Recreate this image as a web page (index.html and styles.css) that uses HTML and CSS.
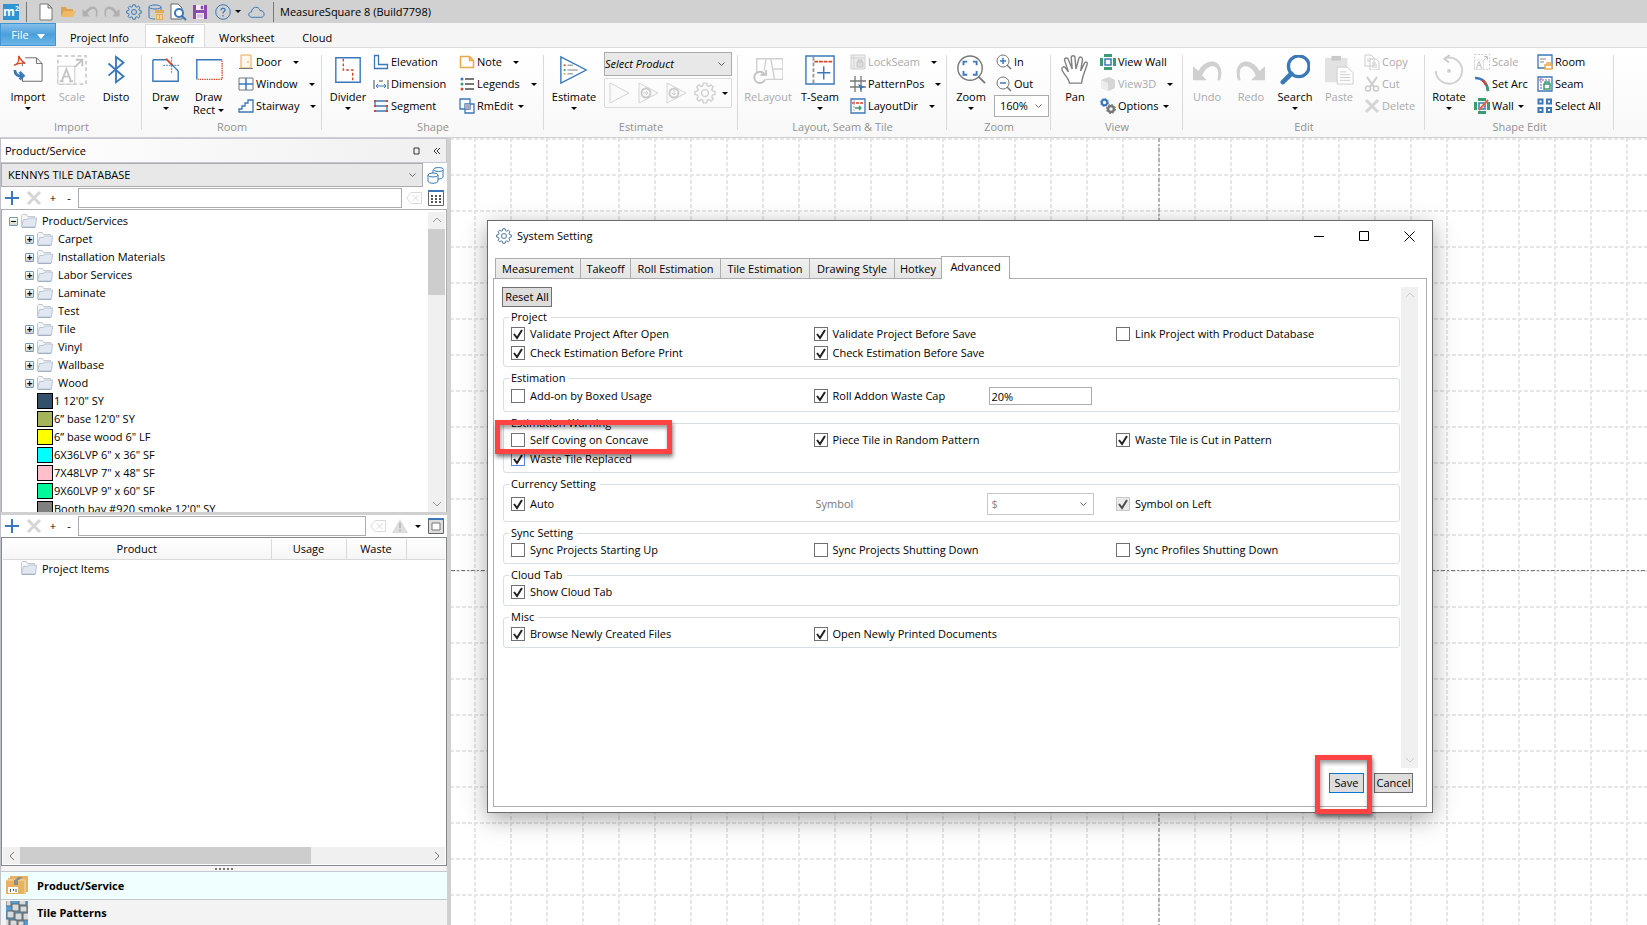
FILE: index.html
```
<!DOCTYPE html>
<html lang="en">
<head>
    <meta charset="UTF-8">
    <meta name="viewport" content="width=device-width, initial-scale=1.0">
    <title>MeasureSquare 8 (Build7798)</title>
    <link rel="stylesheet" href="styles.css">
</head>
<body>

    <!-- shared icons -->
    <svg class="defs" aria-hidden="true">
        <symbol id="i-gear" viewBox="0 0 16 16">
            <path d="M6.8 .8h2.4l.4 1.900 1.200.5 1.600-1.100 1.600 1.600-1.100 1.600.5 1.200 1.900.4v2.200l-1.900.4-.5 1.200 1.100 1.600-1.600 1.600-1.600-1.100-1.200.5-.4 1.900H6.800l-.4-1.900-1.200-.5-1.600 1.100L2 12.300l1.100-1.600-.5-1.200L.7 9.100V6.900l1.900-.4.5-1.200L2 3.700l1.600-1.600 1.600 1.100 1.200-.5z" fill="none" stroke="currentColor"/>
            <circle cx="8" cy="8" r="2.500" fill="none" stroke="currentColor"/>
        </symbol>
        <symbol id="i-folder" viewBox="0 0 16 14">
            <path d="M.5 12.500v-11l1-1h4l1 2h7v2" fill="#f4f6f8" stroke="#c3c9d1"/>
            <path d="M.5 13l2-7.500h4l1-1.500h8l-1 9z" fill="#e1e8f2" stroke="#b9c5d6"/>
            <path d="M1 13.500h13" stroke="#a3afbe"/>
        </symbol>
        <symbol id="i-add" viewBox="0 0 16 16">
            <path d="M8 1v14M1 8h14" stroke="#3a78b9" stroke-width="2"/>
        </symbol>
        <symbol id="i-del" viewBox="0 0 16 16">
            <path d="M2 2l12 12M14 2L2 14" stroke="#d5d5d5" stroke-width="3"/>
        </symbol>
        <symbol id="i-clear" viewBox="0 0 16 12">
            <path d="M.7 6L5 .5h10.500v11H5zM6.500 3l6 6M12.500 3l-6 6" fill="none" stroke="#dadada"/>
        </symbol>
        <symbol id="i-undo" viewBox="0 0 32 22">
            <path d="M1 6v15h15l-5-5c2-6 7-11 12-10 5 1 6 7 4 15h3c3-9 1-18-7-20C16 0 10 5 7 11z" fill="currentColor"/>
        </symbol>
        <symbol id="i-scale" viewBox="0 0 32 32">
            <path d="M1 1h30v30H1z" fill="none" stroke="#d0d0d0" stroke-width="2" stroke-dasharray="4 3"/>
            <path d="M1 12h18v19H1z" fill="#fff" stroke="#c8c8c8"/>
            <path d="M5 28l5-13 5 13M7 23h6M3 28h4M13 28h4M19 13l7-7M20 5h7v7" fill="none" stroke="#c4c4c4" stroke-width="2"/>
        </symbol>
    </svg>

    <header class="titlebar">
        <span class="logo">m<sup>2</sup></span>
        <span class="sep"></span>
        <div class="quick">
            <button aria-label="New"><svg width="16" height="18" viewBox="0 0 16 18"><path d="M2 1h8l4 4v12H2zM10 1v4h4" fill="#fff" stroke="#777"/></svg></button>
            <button aria-label="Open"><svg width="18" height="14" viewBox="0 0 18 14"><path d="M2 12V2h5l1 2h6v3H5z" fill="#e0a24c"/><path d="M2 12l3-6h12l-3 6z" fill="#efb968"/></svg></button>
            <button aria-label="Undo" class="off"><svg width="16" height="11"><use href="#i-undo"/></svg></button>
            <button aria-label="Redo" class="off"><svg width="16" height="11" class="flip"><use href="#i-undo"/></svg></button>
            <button aria-label="Settings" class="blue"><svg width="16" height="16"><use href="#i-gear"/></svg></button>
            <button aria-label="Database"><svg width="16" height="16" viewBox="0 0 16 16"><path d="M1 3v10c0 1 2 2 6 2M13 3v4" fill="none" stroke="#3a78b9"/><ellipse cx="7" cy="3" rx="6" ry="2" fill="none" stroke="#3a78b9"/><path d="M7 6h9v3H7zM8 10h7v6H8z" fill="#e8a94f"/><path d="M10 11v4M13 11v4" stroke="#fff"/></svg></button>
            <button aria-label="Preview"><svg width="18" height="18" viewBox="0 0 18 18"><path d="M2 1h7l4 4v11H2z" fill="#fff" stroke="#666"/><circle cx="10" cy="10" r="4" fill="#fff" stroke="#3a78b9" stroke-width="2"/><path d="M13 13l4 4" stroke="#3a78b9" stroke-width="2"/></svg></button>
            <button aria-label="Save"><svg width="14" height="14" viewBox="0 0 14 14"><path d="M0 0h14v14H0z" fill="#8b4bab"/><path d="M3 0h8v5H3zM3 8h8v6H3z" fill="#f3edf6"/><path d="M8 1h2v3H8zM4 10h6M4 12h6" fill="#8b4bab" stroke="#8b4bab" stroke-width="0.500"/></svg></button>
            <button aria-label="Help" class="help"><svg width="16" height="16" viewBox="0 0 16 16"><circle cx="8" cy="8" r="7.300" fill="none" stroke="#3a78b9"/><path d="M6 6.300C6 3.500 10.400 3.700 10 6.300 9.800 7.600 8 7.700 8 9.500M8 11v1.500" fill="none" stroke="#3a78b9" stroke-width="1.300"/></svg><i class="arrow"></i></button>
            <button aria-label="Cloud"><svg width="17" height="12" viewBox="0 0 17 12"><path d="M4 11.300C-.5 11 0 6 3.500 6 4 0 11 0 12 4.500c5 0 5.500 6 1.500 6.800z" fill="none" stroke="#3a78b9"/></svg></button>
        </div>
        <span class="sep"></span>
        <h1>MeasureSquare 8 (Build7798)</h1>
    </header>

    <nav class="menu">
        <button class="file">File <i></i></button>
        <a href="#">Project Info</a>
        <a href="#" class="active">Takeoff</a>
        <a href="#">Worksheet</a>
        <a href="#">Cloud</a>
    </nav>

    <div class="ribbon">
        <section class="group g-import">
            <div class="tools">
                <button class="big"><svg viewBox="0 0 32 32"><path d="M13 3h12l6 6v19H10v-4M25 3v6h6" fill="none" stroke="#666"/><path d="M10 9v3M10 26v2" stroke="#666"/><path d="M1 11c4-1 6-5 5-10 2 4 3 6 7 8-4-1-8 0-12 2z" fill="none" stroke="#d2492a" stroke-width="1.500"/><path d="M2 16c0 5 3 7 8 6M7 18l4 4-4 4" fill="none" stroke="#3a78b9" stroke-width="3"/></svg>Import<i class="arrow"></i></button>
                <button class="big off"><svg viewBox="0 0 32 32"><use href="#i-scale"/></svg>Scale</button>
                <button class="big"><svg viewBox="0 0 32 32"><path d="M8 9l16 14-8 6V2l8 6L8 22" fill="none" stroke="#3a78b9" stroke-width="2"/></svg>Disto</button>
            </div>
            <h2>Import</h2>
        </section>

        <section class="group g-room">
            <div class="tools">
                <button class="big"><svg viewBox="0 0 32 32"><path d="M2 5h14M29 17v11H2V5" fill="none" stroke="#3a78b9" stroke-width="1.500"/><path d="M22 10l7 7" stroke="#3a78b9" stroke-width="1.500"/><path d="M16 4l7 7" stroke="#d2492a" stroke-width="2"/><path d="M22 2v18M13 11h18" stroke="#3a78b9" stroke-dasharray="2 1"/></svg>Draw<i class="arrow"></i></button>
                <button class="big"><svg viewBox="0 0 32 32"><path d="M3 26V5h27" fill="none" stroke="#3a78b9" stroke-width="1.500"/><path d="M30 6v20H4" fill="none" stroke="#d2492a" stroke-width="1.500" stroke-dasharray="1.500 1"/></svg>Draw<span>Rect <i class="arrow"></i></span></button>
                <div class="col">
                    <button class="small"><svg viewBox="0 0 16 16"><path d="M3 1h10v13H3z" fill="#fff8ec" stroke="#e8a94f"/><path d="M1 14.500h14" stroke="#777"/><path d="M10 7v2" stroke="#e8a94f"/></svg>Door<i class="arrow far"></i></button>
                    <button class="small"><svg viewBox="0 0 16 16"><path d="M1 2h14v12H1z" fill="#fff" stroke="#777"/><path d="M8 2v12M1 8h14" stroke="#3a78b9" stroke-width="1.500"/></svg>Window<i class="arrow far"></i></button>
                    <button class="small"><svg viewBox="0 0 16 16"><path d="M1 14v-3h3V8h3V5h3V2h5v12z" fill="#fff" stroke="#3a78b9" stroke-width="1.300"/></svg>Stairway<i class="arrow far"></i></button>
                </div>
            </div>
            <h2>Room</h2>
        </section>

        <section class="group g-shape">
            <div class="tools">
                <button class="big"><svg viewBox="0 0 32 32"><path d="M3 3h26v26H3z" fill="#fff" stroke="#3a78b9" stroke-width="1.500"/><path d="M11 4v12h10v12" fill="none" stroke="#d2492a" stroke-width="1.500" stroke-dasharray="3 2"/></svg>Divider<i class="arrow"></i></button>
                <div class="col">
                    <button class="small"><svg viewBox="0 0 16 16"><path d="M1.500 1.500h4v9h9v4h-13z" fill="#fff" stroke="#3a78b9" stroke-width="1.300"/></svg>Elevation</button>
                    <button class="small"><svg viewBox="0 0 16 16"><path d="M1 4v9M15 4v9M6 5h4" stroke="#888" stroke-width="1.500"/><path d="M3 10h10M5 8l-2 2 2 2M11 8l2 2-2 2" fill="none" stroke="#3a78b9"/></svg>Dimension</button>
                    <button class="small"><svg viewBox="0 0 16 16"><path d="M2 3h12M2 8h12M2 13h12M2 3v5M14 8v5" stroke="#3a78b9" stroke-width="1.300"/><path d="M1 2h2v2H1zM13 2h2v2h-2zM1 7h2v2H1zM13 7h2v2h-2zM1 12h2v2H1zM13 12h2v2h-2z" fill="#d2492a"/></svg>Segment</button>
                </div>
                <div class="col">
                    <button class="small"><svg viewBox="0 0 16 16"><path d="M1.500 2.500h9l4 4v7h-13zM10.500 2.500v4h4" fill="#fff" stroke="#e8a94f" stroke-width="1.500"/></svg>Note<i class="arrow far"></i></button>
                    <button class="small"><svg viewBox="0 0 16 16"><circle cx="3" cy="3" r="1.500" fill="#3a78b9"/><circle cx="3" cy="8" r="1.500" fill="#3b9b73"/><circle cx="3" cy="13" r="1.500" fill="#d2492a"/><path d="M6 3h9M6 8h9M6 13h9" stroke="#777" stroke-width="2"/></svg>Legends<i class="arrow far"></i></button>
                    <button class="small"><svg viewBox="0 0 16 16"><path d="M1 1h10v10H1zM6 6h9v9H6z" fill="none" stroke="#3a78b9" stroke-width="1.300"/><path d="M6 6h5v5H6z" fill="#aaa"/></svg>RmEdit<i class="arrow"></i></button>
                </div>
            </div>
            <h2>Shape</h2>
        </section>

        <section class="group g-estimate">
            <div class="tools">
                <button class="big"><svg viewBox="0 0 32 32"><path d="M2 2v28l27-14z" fill="#fff" stroke="#3a78b9" stroke-width="1.500"/><path d="M9 11h6M9 16h11M9 20h6" stroke="#aaa" stroke-width="1.500"/><path d="M5 10h2v2H5z" fill="#d2492a"/><path d="M5 15h2v2H5z" fill="#3b9b73"/><path d="M5 19h2v2H5z" fill="#e8a94f"/></svg>Estimate<i class="arrow"></i></button>
                <div class="estimate-box">
                    <select class="product" aria-label="Product"><option>Select Product</option></select>
                    <div class="play">
                        <button aria-label="Run"><svg viewBox="0 0 22 22"><path d="M2 1v20l19-10z" fill="#fafafa" stroke="#d4d4d4"/></svg></button>
                        <button aria-label="Run next"><svg viewBox="0 0 22 22"><path d="M2 1v20l19-10z" fill="#fafafa" stroke="#d4d4d4"/><circle cx="9" cy="11" r="4.500" fill="none" stroke="#ccc" stroke-width="2"/><path d="M6 11h5M9 9l2 2-2 2" fill="none" stroke="#ccc"/></svg></button>
                        <button aria-label="Run down"><svg viewBox="0 0 22 22"><path d="M2 1v20l19-10z" fill="#fafafa" stroke="#d4d4d4"/><circle cx="9" cy="11" r="4.500" fill="none" stroke="#ccc" stroke-width="2"/><path d="M9 8v5M7 11l2 2 2-2" fill="none" stroke="#ccc"/></svg></button>
                        <button aria-label="Options" class="grey"><svg viewBox="0 0 16 16"><use href="#i-gear"/></svg></button>
                        <i class="arrow"></i>
                    </div>
                </div>
            </div>
            <h2>Estimate</h2>
        </section>

        <section class="group g-layout">
            <div class="tools">
                <button class="big wide off"><svg viewBox="0 0 32 32"><path d="M4 20V4h28v22H14M14 4l-2 12M19 4l4 22M21 15h11" fill="none" stroke="#d0d0d0" stroke-width="1.500"/><path d="M12 20a6 6 0 1 0 1 6M8 21h6v-5" fill="none" stroke="#c4c4c4" stroke-width="2"/></svg>ReLayout</button>
                <button class="big"><svg viewBox="0 0 32 32"><path d="M1 1h30v30H1z" fill="#fff" stroke="#3a78b9" stroke-width="1.500"/><path d="M9 2v28" stroke="#999" stroke-width="2" stroke-dasharray="4 2"/><path d="M10 7h20" stroke="#d2492a" stroke-width="2" stroke-dasharray="4 1"/><path d="M20 12v14M13 19h14" stroke="#3a78b9" stroke-width="1.500"/></svg>T-Seam<i class="arrow"></i></button>
                <div class="col">
                    <button class="small off"><svg viewBox="0 0 16 16"><path d="M1 1h14v14H1zM4 1v14M1 4h14" fill="#eee" stroke="#d0d0d0"/><path d="M7 8h6v5H7zM8 8V6h4v2" fill="#ddd" stroke="#c4c4c4"/></svg>LockSeam<i class="arrow far"></i></button>
                    <button class="small"><svg viewBox="0 0 16 16"><path d="M5 0v16M11 0v16M0 5h16M0 11h16" stroke="#777" stroke-width="1.300"/><path d="M8 8l7 3-3 1-1 3z" fill="#3a78b9"/></svg>PatternPos<i class="arrow far"></i></button>
                    <button class="small"><svg viewBox="0 0 16 16"><path d="M1 1h14v14H1z" fill="#fff" stroke="#3a78b9" stroke-width="1.300"/><path d="M2 5h12" stroke="#d2492a" stroke-width="1.500" stroke-dasharray="3 1"/><path d="M4 2v12" stroke="#aaa" stroke-dasharray="2 1"/><path d="M5 10h6M9 8l2 2-2 2" fill="none" stroke="#3b9b73" stroke-width="1.300"/></svg>LayoutDir<i class="arrow far"></i></button>
                </div>
            </div>
            <h2>Layout, Seam &amp; Tile</h2>
        </section>

        <section class="group g-zoom">
            <div class="tools">
                <button class="big"><svg viewBox="0 0 32 32"><circle cx="15" cy="14" r="13" fill="#fff" stroke="#777" stroke-width="1.500"/><path d="M24 23l7 7" stroke="#777" stroke-width="2"/><path d="M8 11V7h4M18 7h4v4M22 17v4h-4M12 21H8v-4" fill="none" stroke="#3a78b9" stroke-width="2"/></svg>Zoom<i class="arrow"></i></button>
                <div class="col">
                    <button class="small"><svg viewBox="0 0 16 16"><circle cx="7" cy="7" r="6" fill="#fff" stroke="#777"/><path d="M11 11l4 4" stroke="#777" stroke-width="1.500"/><path d="M4 7h6M7 4v6" stroke="#3a78b9" stroke-width="1.500"/></svg>In</button>
                    <button class="small"><svg viewBox="0 0 16 16"><circle cx="7" cy="7" r="6" fill="#fff" stroke="#777"/><path d="M11 11l4 4" stroke="#777" stroke-width="1.500"/><path d="M4 7h6" stroke="#3a78b9" stroke-width="1.500"/></svg>Out</button>
                    <select class="percent" aria-label="Zoom level"><option>160%</option></select>
                </div>
            </div>
            <h2>Zoom</h2>
        </section>

        <section class="group g-view">
            <div class="tools">
                <button class="big"><svg viewBox="0 0 32 32"><path d="M10 30c0-5-7-10-8-15 0-3 3-3 4-1l3 4L5 6c-1-3 3-4 4-1l4 10L12 3c0-3 4-3 4 0l1 12 3-11c1-3 4-2 4 1l-2 12 4-8c1-3 4-1 3 1-2 6-5 12-6 20z" fill="#fff" stroke="#808080" stroke-width="1.500"/></svg>Pan</button>
                <div class="col">
                    <button class="small"><svg viewBox="0 0 16 16"><path d="M0 4h3v8H0zM13 4h3v8h-3zM4 0h8v3H4zM4 13h8v3H4z" fill="#3b9b73"/><path d="M5 5h6v6H5z" fill="#fff" stroke="#3a78b9" stroke-width="1.500"/></svg>View Wall</button>
                    <button class="small off"><svg viewBox="0 0 16 16"><path d="M1 4l8-3 6 3v8l-6 3-8-3z" fill="#d6d6d6"/><path d="M1 4l7 3v8l-7-3z" fill="#ececec"/></svg>View3D<i class="arrow far"></i></button>
                    <button class="small"><svg viewBox="0 0 16 16"><circle cx="4.500" cy="4.500" r="2.700" fill="none" stroke="#3a78b9" stroke-width="2"/><circle cx="4.500" cy="4.500" r="4" fill="none" stroke="#3a78b9" stroke-dasharray="1.600 1.500"/><circle cx="11" cy="11" r="3" fill="none" stroke="#777" stroke-width="2.500"/><circle cx="11" cy="11" r="4.600" fill="none" stroke="#777" stroke-dasharray="1.800 1.800"/></svg>Options<i class="arrow"></i></button>
                </div>
            </div>
            <h2>View</h2>
        </section>

        <section class="group g-edit">
            <div class="tools">
                <button class="big off"><svg viewBox="0 -3 32 32"><use href="#i-undo" width="32" height="28"/></svg>Undo</button>
                <button class="big off"><svg viewBox="0 -3 32 32" class="flip"><use href="#i-undo" width="32" height="28"/></svg>Redo</button>
                <button class="big"><svg viewBox="0 0 32 32"><circle cx="20" cy="12" r="11" fill="#fff" stroke="#3a78b9" stroke-width="3.500"/><path d="M12 20l-9 9" stroke="#3a78b9" stroke-width="5" stroke-linecap="round"/></svg>Search<i class="arrow"></i></button>
                <button class="big off"><svg viewBox="0 0 32 32"><path d="M1 3h24v26H1z" fill="#e2e2e2"/><path d="M8 1h10v5H8z" fill="#c9c9c9"/><path d="M14 13h11l6 6v12H14z" fill="#fff" stroke="#ccc"/><path d="M17 18h7M17 21h11M17 24h11M17 27h11" stroke="#ccc"/></svg>Paste</button>
                <div class="col">
                    <button class="small off"><svg viewBox="0 0 16 16"><path d="M1 1h6l3 3v8H1zM6 5h6l3 3v8H6z" fill="#fff" stroke="#ccc"/><path d="M3 5h4M3 7h3M8 9h4M8 11h5M8 13h5" stroke="#ccc"/></svg>Copy</button>
                    <button class="small off"><svg viewBox="0 0 16 16"><path d="M3 1l7 10M13 1L6 11" stroke="#ccc" stroke-width="2"/><circle cx="4" cy="12.500" r="2.500" fill="none" stroke="#ccc" stroke-width="1.500"/><circle cx="12" cy="12.500" r="2.500" fill="none" stroke="#ccc" stroke-width="1.500"/></svg>Cut</button>
                    <button class="small off"><svg viewBox="0 0 16 16"><use href="#i-del"/></svg>Delete</button>
                </div>
            </div>
            <h2>Edit</h2>
        </section>

        <section class="group g-shape-edit">
            <div class="tools">
                <button class="big"><svg viewBox="0 0 32 32"><path d="M13 3a14 14 0 1 1-11 14" fill="none" stroke="#d0d0d0" stroke-width="2"/><path d="M17 0l-6 4 5 4" fill="none" stroke="#ccc" stroke-width="2"/><circle cx="16" cy="17" r="2" fill="#ccc"/></svg>Rotate<i class="arrow"></i></button>
                <div class="col">
                    <button class="small off"><svg viewBox="0 0 32 32"><use href="#i-scale"/></svg>Scale</button>
                    <button class="small"><svg viewBox="0 0 16 16"><path d="M1 2c8 0 12 5 13 13" fill="none" stroke="#3a78b9" stroke-width="2.500"/><path d="M8 4c2 1 3 3 4 5" fill="none" stroke="#d2492a" stroke-width="2.500"/><path d="M13 10l1 5" stroke="#3b9b73" stroke-width="2.500"/></svg>Set Arc</button>
                    <button class="small"><svg viewBox="0 0 16 16"><path d="M0 4h3v8H0zM13 4h3v8h-3zM4 0h8v3H4zM4 13h8v3H4z" fill="#3b9b73"/><path d="M5 5h6v6H5z" fill="#fff" stroke="#3a78b9" stroke-width="1.500"/><path d="M5 12L14 2" stroke="#e0663f" stroke-width="2"/></svg>Wall<i class="arrow"></i></button>
                </div>
                <div class="col">
                    <button class="small"><svg viewBox="0 0 16 16"><path d="M1 1h14v13H1z" fill="#fff" stroke="#3a78b9" stroke-width="1.300"/><path d="M3 5h6M3 8h4" stroke="#888"/><path d="M8 11h7v4H8zM10 11V9h4v2" fill="#fff" stroke="#e8a94f" stroke-width="1.500"/></svg>Room</button>
                    <button class="small"><svg viewBox="0 0 16 16"><path d="M1 1h14v14H1z" fill="#fff" stroke="#3a78b9" stroke-width="1.300"/><path d="M4 2v12M2 4h12" stroke="#8b4bab" stroke-dasharray="2 1"/><path d="M7 8h6v5H7zM8 8V6h4v2" fill="#fff" stroke="#3b9b73" stroke-width="1.500"/></svg>Seam</button>
                    <button class="small"><svg viewBox="0 0 16 16"><path d="M1.500 1.500h4v4h-4zM10 1.500h4v4h-4zM1.500 10h4v4h-4zM10 10h4v4h-4z" fill="#fff" stroke="#3a78b9" stroke-width="2"/></svg>Select All</button>
                </div>
            </div>
            <h2>Shape Edit</h2>
        </section>
    </div>

    <main>
        <aside class="side">
            <div class="side-head">
                <h2>Product/Service</h2>
                <button aria-label="Pin"><svg width="8" height="8" viewBox="0 0 8 8"><path d="M1 1h5v6H1z" fill="none" stroke="#333"/></svg></button>
                <button aria-label="Collapse"><svg width="8" height="8" viewBox="0 0 8 8"><path d="M4 1L1 4l3 3M7 1L4 4l3 3" fill="none" stroke="#333"/></svg></button>
            </div>
            <div class="db-row">
                <select aria-label="Database"><option>KENNYS TILE DATABASE</option></select>
                <button aria-label="Databases"><svg width="18" height="18" viewBox="0 0 18 18"><path d="M6 4v4M16 4v7c0 1-2 2-5 2" fill="none" stroke="#3a78b9"/><ellipse cx="11.500" cy="3.500" rx="5" ry="2" fill="#fff" stroke="#3a78b9"/><path d="M1 9v6c0 3 10 3 10 0V9" fill="#fff" stroke="#3a78b9"/><ellipse cx="6" cy="9" rx="5" ry="2" fill="#fff" stroke="#3a78b9"/></svg></button>
            </div>
            <div class="bar">
                <button aria-label="Add"><svg width="16" height="16"><use href="#i-add"/></svg></button>
                <button aria-label="Delete"><svg width="16" height="16"><use href="#i-del"/></svg></button>
                <button>+</button>
                <button>-</button>
                <input type="text" aria-label="Search products">
                <button aria-label="Clear"><svg width="16" height="12"><use href="#i-clear"/></svg></button>
                <button aria-label="Grid"><svg width="16" height="16" viewBox="0 0 16 16"><path d="M.5 .5h15v15H.5z" fill="#fff" stroke="#666"/><path d="M0 1h16" stroke="#3a78b9" stroke-width="2"/><path d="M3 6h10M3 9h10M3 12h10" stroke="#555" stroke-width="2" stroke-dasharray="2 2"/></svg></button>
            </div>

            <div class="tree-box">
                <ul class="tree">
                    <li class="root"><button class="exp" aria-label="Collapse">−</button><svg class="folder"><use href="#i-folder"/></svg>Product/Services</li>
                    <li><button class="exp" aria-label="Expand">+</button><svg class="folder"><use href="#i-folder"/></svg>Carpet</li>
                    <li><button class="exp" aria-label="Expand">+</button><svg class="folder"><use href="#i-folder"/></svg>Installation Materials</li>
                    <li><button class="exp" aria-label="Expand">+</button><svg class="folder"><use href="#i-folder"/></svg>Labor Services</li>
                    <li><button class="exp" aria-label="Expand">+</button><svg class="folder"><use href="#i-folder"/></svg>Laminate</li>
                    <li class="leaf"><svg class="folder"><use href="#i-folder"/></svg>Test</li>
                    <li><button class="exp" aria-label="Expand">+</button><svg class="folder"><use href="#i-folder"/></svg>Tile</li>
                    <li><button class="exp" aria-label="Expand">+</button><svg class="folder"><use href="#i-folder"/></svg>Vinyl</li>
                    <li><button class="exp" aria-label="Expand">+</button><svg class="folder"><use href="#i-folder"/></svg>Wallbase</li>
                    <li><button class="exp" aria-label="Expand">+</button><svg class="folder"><use href="#i-folder"/></svg>Wood</li>
                    <li class="leaf"><i class="swatch navy"></i>1 12'0" SY</li>
                    <li class="leaf"><i class="swatch olive"></i>6” base 12'0" SY</li>
                    <li class="leaf"><i class="swatch yellow"></i>6” base wood 6" LF</li>
                    <li class="leaf"><i class="swatch cyan"></i>6X36LVP 6" x 36" SF</li>
                    <li class="leaf"><i class="swatch pink"></i>7X48LVP 7" x 48" SF</li>
                    <li class="leaf"><i class="swatch green"></i>9X60LVP 9" x 60" SF</li>
                    <li class="leaf"><i class="swatch gray"></i>Booth bay #920 smoke 12'0" SY</li>
                </ul>
                <div class="vscroll">
                    <svg viewBox="0 0 17 17"><path d="M5 10l4-4 4 4" fill="none" stroke="#999"/></svg>
                    <i class="thumb"></i>
                    <svg viewBox="0 0 17 17"><path d="M5 7l4 4 4-4" fill="none" stroke="#999"/></svg>
                </div>
            </div>

            <div class="bar lower">
                <button aria-label="Add"><svg width="16" height="16"><use href="#i-add"/></svg></button>
                <button aria-label="Delete"><svg width="16" height="16"><use href="#i-del"/></svg></button>
                <button>+</button>
                <button>-</button>
                <input type="text" aria-label="Search project items">
                <button aria-label="Clear"><svg width="16" height="12"><use href="#i-clear"/></svg></button>
                <button aria-label="Warnings"><svg width="16" height="14" viewBox="0 0 16 14"><path d="M8 0l8 14H0z" fill="#dedede"/><path d="M8 4v5M8 10.500v2" stroke="#b5b5b5" stroke-width="1.500"/></svg></button>
                <button class="drop" aria-label="More"><i class="arrow"></i></button>
                <button aria-label="Window"><svg width="16" height="16" viewBox="0 0 16 16"><path d="M.5 .5h15v15H.5z" fill="#ddd" stroke="#666"/><path d="M0 1h16" stroke="#3a78b9" stroke-width="2"/><path d="M4 5h8v7H4z" fill="#fff" stroke="#777"/></svg></button>
            </div>

            <div class="items-box">
                <table>
                    <thead>
                        <tr><th class="c-product">Product</th><th class="c-usage">Usage</th><th class="c-waste">Waste</th><th></th></tr>
                    </thead>
                    <tbody>
                        <tr><td colspan="4"><svg class="folder"><use href="#i-folder"/></svg>Project Items</td></tr>
                    </tbody>
                </table>
                <div class="hscroll">
                    <svg viewBox="0 0 17 17"><path d="M11 5L7 9l4 4" fill="none" stroke="#777"/></svg>
                    <i class="thumb"></i>
                    <svg viewBox="0 0 17 17"><path d="M7 5l4 4-4 4" fill="none" stroke="#777"/></svg>
                </div>
            </div>

            <div class="grip"><i></i></div>
            <a href="#" class="panel-link current"><svg width="22" height="20" viewBox="0 0 22 20"><path d="M4 0h18v16h-2v2H0V4h2V2h2z" fill="#e9b263"/><path d="M0 4h19v14" fill="none" stroke="#f6dcb2"/><path d="M8 4h4v5H8zM12 1h5l-4 3H9z" fill="#8d8d8d"/><path d="M2 11h10v6H2z" fill="#fff"/><path d="M4.500 13v3M7.500 13v2M10 13v3" stroke="#555"/></svg>Product/Service</a>
            <a href="#" class="panel-link"><svg width="22" height="24" viewBox="0 0 22 24"><path d="M0 0h22v24H0z" fill="#4f9fdd"/><g fill="#d9dadb" stroke="#666"><path d="M0-1h5v6H0zM6 3h7v7H6zM13-2h7v6h-7zM14 5h7v6h-7zM1 10h7v7H1zM9 12h7v7H9zM17 12h6v7h-6zM4 19h7v6H4zM-3 18h6v7h-6zM12 20h6v5h-6z"/></g></svg>Tile Patterns</a>
        </aside>

        <div class="canvas">
            <svg class="grid" width="100%" height="100%">
                <defs>
                    <pattern id="cells" x="23" y="0" width="36" height="36" patternUnits="userSpaceOnUse">
                        <path d="M0 1h36M1 0v36" stroke="#e6e6e6" stroke-width="2" stroke-dasharray="4 2"/>
                    </pattern>
                </defs>
                <rect width="100%" height="100%" fill="url(#cells)"/>
                <path d="M0 432.500h3000" stroke="#777" stroke-dasharray="4 2 2 2"/>
                <path d="M708 0v2000" stroke="#b4b4b4" stroke-width="2" stroke-dasharray="4 2 2 2"/>
            </svg>

            <div class="dialog" role="dialog" aria-labelledby="dialog-title">
                <div class="dialog-head">
                    <svg class="head-icon" width="16" height="16"><use href="#i-gear"/></svg>
                    <h2 id="dialog-title">System Setting</h2>
                    <button aria-label="Minimize"><svg width="11" height="11" viewBox="0 0 11 11"><path d="M0 5.500h10" stroke="#000"/></svg></button>
                    <button aria-label="Maximize"><svg width="11" height="11" viewBox="0 0 11 11"><path d="M.5 .5h9v9h-9z" fill="none" stroke="#000"/></svg></button>
                    <button aria-label="Close"><svg width="11" height="11" viewBox="0 0 11 11"><path d="M.5 .5l10 10M10.500 .5l-10 10" stroke="#000"/></svg></button>
                </div>

                <div class="tabs">
                    <button class="t-measurement">Measurement</button>
                    <button class="t-takeoff">Takeoff</button>
                    <button class="t-roll">Roll Estimation</button>
                    <button class="t-tile">Tile Estimation</button>
                    <button class="t-drawing">Drawing Style</button>
                    <button class="t-hotkey">Hotkey</button>
                    <button class="t-advanced active">Advanced</button>
                </div>

                <div class="pane">
                    <div class="pane-body">
                        <form class="settings">
                            <button type="button" class="btn">Reset All</button>

                            <fieldset>
                                <legend>Project</legend>
                                <div class="row">
                                    <label><input type="checkbox" checked>Validate Project After Open</label>
                                    <label><input type="checkbox" checked>Validate Project Before Save</label>
                                    <label><input type="checkbox">Link Project with Product Database</label>
                                    <label><input type="checkbox" checked>Check Estimation Before Print</label>
                                    <label><input type="checkbox" checked>Check Estimation Before Save</label>
                                </div>
                            </fieldset>

                            <fieldset>
                                <legend>Estimation</legend>
                                <div class="row medium">
                                    <label><input type="checkbox">Add-on by Boxed Usage</label>
                                    <div class="pair">
                                        <label><input type="checkbox" checked>Roll Addon Waste Cap</label>
                                        <input type="text" class="cap" value="20%" aria-label="Waste cap">
                                    </div>
                                </div>
                            </fieldset>

                            <fieldset>
                                <legend>Estimation Warning</legend>
                                <div class="row">
                                    <label><input type="checkbox">Self Coving on Concave</label>
                                    <label><input type="checkbox" checked>Piece Tile in Random Pattern</label>
                                    <label><input type="checkbox" checked>Waste Tile is Cut in Pattern</label>
                                    <label><input type="checkbox" class="focus" checked>Waste Tile Replaced</label>
                                </div>
                                <span class="mark mark-option"></span>
                            </fieldset>

                            <fieldset>
                                <legend>Currency Setting</legend>
                                <div class="row tall">
                                    <label><input type="checkbox" checked>Auto</label>
                                    <div class="pair">
                                        <label for="symbol" class="muted">Symbol</label>
                                        <select id="symbol" disabled><option>$</option></select>
                                    </div>
                                    <label><input type="checkbox" checked disabled>Symbol on Left</label>
                                </div>
                            </fieldset>

                            <fieldset>
                                <legend>Sync Setting</legend>
                                <div class="row">
                                    <label><input type="checkbox">Sync Projects Starting Up</label>
                                    <label><input type="checkbox">Sync Projects Shutting Down</label>
                                    <label><input type="checkbox">Sync Profiles Shutting Down</label>
                                </div>
                            </fieldset>

                            <fieldset>
                                <legend>Cloud Tab</legend>
                                <div class="row">
                                    <label><input type="checkbox" checked>Show Cloud Tab</label>
                                </div>
                            </fieldset>

                            <fieldset>
                                <legend>Misc</legend>
                                <div class="row">
                                    <label><input type="checkbox" checked>Browse Newly Created Files</label>
                                    <label><input type="checkbox" checked>Open Newly Printed Documents</label>
                                </div>
                            </fieldset>
                        </form>
                        <div class="vscroll">
                            <svg viewBox="0 0 17 17"><path d="M5 10l4-4 4 4" fill="none" stroke="#ccc"/></svg>
                            <svg viewBox="0 0 17 17"><path d="M5 7l4 4 4-4" fill="none" stroke="#ccc"/></svg>
                        </div>
                    </div>
                    <div class="actions">
                        <button class="btn primary">Save<span class="mark mark-save"></span></button>
                        <button class="btn">Cancel</button>
                    </div>
                </div>
            </div>
        </div>
    </main>

</body>
</html>
```
FILE: styles.css
```
* {
    box-sizing: border-box;
}

body {
    display: flex;
    flex-direction: column;
    height: 100vh;
    margin: 0;
    overflow: hidden;
    background: #fff;
    color: #000;
    font: 11px/16px "Open Sans", "Noto Sans", sans-serif;
}

button, input, select {
    margin: 0;
    padding: 0;
    border: 0;
    border-radius: 0;
    background: none;
    color: inherit;
    font: inherit;
}

h1, h2 {
    margin: 0;
    font-size: inherit;
    font-weight: normal;
}

a {
    color: inherit;
    text-decoration: none;
}

svg {
    display: block;
    flex: none;
}

select {
    appearance: none;
    background: url("data:image/svg+xml,%3Csvg xmlns='http://www.w3.org/2000/svg' width='7' height='5'%3E%3Cpath d='M.5 .5l3 3 3-3' fill='none' stroke='%23666'/%3E%3C/svg%3E") no-repeat right 6px center;
}

.defs {
    display: none;
}

.flip {
    transform: scaleX(-1);
}

.arrow {
    flex: none;
    display: inline-block;
    border: 3px solid transparent;
    border-top-color: #000;
    border-bottom: 0;
}

/* title bar */
.titlebar {
    flex: none;
    display: flex;
    align-items: center;
    height: 23px;
    padding-left: 3px;
    background: #d1d1d1;
}

.logo {
    width: 16px;
    height: 16px;
    background: #2e94d4;
    color: #fff;
    font-size: 12px;
    font-weight: bold;
    line-height: 16px;
    text-align: center;
    white-space: nowrap;
}

.logo sup {
    font-size: 7px;
    line-height: 1px;
    vertical-align: 5px;
}

.sep {
    width: 1px;
    height: 20px;
    margin: 0 6px 0 7px;
    background: #777;
}

.quick {
    display: flex;
    align-items: center;
    width: 233px;
    padding-left: 2px;
}

.quick button {
    flex: none;
    display: flex;
    align-items: center;
    justify-content: center;
    width: 22px;
    height: 20px;
}

.quick .off {
    color: #b0b0b0;
}

.quick .help {
    width: 34px;
    gap: 4px;
}

.quick .blue {
    color: #3a78b9;
}

/* menu */
.menu {
    flex: none;
    display: flex;
    height: 24px;
    background: #f5f5f5;
}

.menu a {
    padding: 0 14px;
    line-height: 30px;
}

.menu .active {
    border: 1px solid #dadada;
    border-bottom: 0;
    margin: 1px 0 -1px 2px;
    padding: 0 10px;
    background: #fff;
    line-height: 28px;
}

.menu .file {
    width: 56px;
    height: 23px;
    border: 1px solid #3f96d6;
    background: linear-gradient(#85bfe9, #4a9fdc 50%, #6db6e8);
    color: #fff;
}

.file i {
    display: inline-block;
    margin-left: 5px;
    border: 4px solid transparent;
    border-top: 5px solid #fff;
    border-bottom: 0;
}

/* ribbon */
.ribbon {
    flex: none;
    display: flex;
    height: 91px;
    padding-left: 1px;
    border-top: 1px solid #dadada;
    border-bottom: 1px solid #d0d0d4;
    background: linear-gradient(#fff, #f8f8f8);
}

.group {
    position: relative;
    flex: none;
}

.group::after {
    content: "";
    position: absolute;
    top: 7px;
    right: 0;
    width: 1px;
    height: 75px;
    background: #dadada;
}

.tools {
    display: flex;
    height: 68px;
    margin-top: 3px;
    padding-left: 2px;
}

.group h2 {
    color: #919191;
    line-height: 16px;
    text-align: center;
}

.g-import {
    width: 141px;
}

.g-import .tools {
    padding-left: 5px;
}

.g-room {
    width: 180px;
}

.g-shape {
    width: 222px;
}

.g-shape .tools {
    padding-left: 4px;
}

.g-estimate {
    width: 194px;
}

.g-estimate .tools {
    padding-left: 8px;
}

.g-layout {
    width: 209px;
}

.g-layout .tools {
    padding-left: 0;
}

.g-zoom {
    width: 104px;
}

.g-view {
    width: 132px;
}

.g-edit {
    width: 242px;
}

.g-shape-edit {
    width: 189px;
}

.big {
    display: flex;
    flex-direction: column;
    align-items: center;
    width: 44px;
    padding-top: 4px;
    line-height: 13px;
    white-space: nowrap;
}

.big svg {
    width: 30px;
    height: 30px;
    margin-bottom: 5px;
}

.big > .arrow {
    margin-top: 4px;
}

.big span .arrow {
    vertical-align: 2px;
}

.wide {
    width: 60px;
}

.g-room .big {
    width: 43px;
}

.ribbon .off {
    color: #aaa;
}

.ribbon .big.off svg {
    color: #d0d0d0;
}

.off .arrow {
    border-top-color: #000;
}

.col {
    margin-left: 3px;
}

.g-room .col, .g-layout .col {
    margin-left: 8px;
}

.g-shape .col:nth-child(2) {
    width: 83px;
}

.g-shape-edit .col:nth-child(2) {
    width: 60px;
}

.small {
    display: flex;
    align-items: center;
    height: 22px;
    white-space: nowrap;
}

.small svg {
    width: 16px;
    height: 16px;
    margin-right: 2px;
}

.small .arrow {
    margin-left: 4px;
}

.small .far {
    margin-left: 11px;
}

.estimate-box {
    width: 128px;
    margin: 1px 0 0 8px;
}

.product {
    display: block;
    width: 128px;
    height: 24px;
    border: 1px solid #acacac;
    background-color: #e8e8e8;
    font-style: italic;
}

.play {
    display: flex;
    align-items: center;
    justify-content: space-between;
    height: 30px;
    margin-top: 2px;
    padding: 0 3px;
    border: 1px solid #dadada;
    border-radius: 2px;
}

.play svg {
    width: 22px;
    height: 22px;
}

.grey {
    color: #d0d0d0;
}

.percent {
    display: block;
    width: 55px;
    height: 22px;
    margin-left: -2px;
    padding-left: 5px;
    border: 1px solid #acacac;
    background-color: #fff;
}

/* left panel */
main {
    flex: 1;
    display: flex;
    min-height: 0;
}

.side {
    flex: none;
    display: flex;
    flex-direction: column;
    width: 451px;
    border-left: 1px solid #bfc1c8;
    border-right: 4px solid #d0d0d0;
    background: #fff;
}

.side-head {
    display: flex;
    align-items: center;
    height: 25px;
    padding: 0 5px 0 4px;
    gap: 12px;
    border: 1px solid #c5c8d0;
    border-left: 0;
    background: linear-gradient(90deg, #fff, #f0f0f0);
}

.side-head h2 {
    flex: 1;
}

.db-row {
    display: flex;
    align-items: center;
    height: 24px;
    gap: 4px;
}

.db-row select {
    width: 422px;
    height: 24px;
    padding-left: 6px;
    border: 1px solid #acacac;
    background-color: #e8e8e8;
}

.bar {
    display: flex;
    align-items: center;
    height: 22px;
    padding: 0 3px;
    gap: 6px;
}

.bar button:nth-child(3), .bar button:nth-child(4) {
    width: 10px;
}

.bar input {
    flex: 1;
    min-width: 0;
    height: 20px;
    margin: 0 -2px;
    border: 1px solid #abadb3;
    background: #fff;
}

.bar .drop {
    display: flex;
    padding: 0 1px;
}

.tree-box {
    display: flex;
    height: 303px;
    margin-bottom: 3px;
    padding: 2px 1px 0 0;
    border: 1px solid #abadb3;
    border-bottom: 0;
    box-shadow: 0 3px #d0d0d0;
}

.tree {
    flex: 1;
    height: 300px;
    margin: 0;
    padding: 0;
    overflow: hidden;
    list-style: none;
}

.tree li {
    display: flex;
    align-items: center;
    height: 18px;
    padding-left: 23px;
}

.tree .root {
    padding-left: 7px;
}

.tree .leaf {
    padding-left: 35px;
}

.exp {
    width: 9px;
    height: 9px;
    margin-right: 3px;
    border: 1px solid #7a98b5;
    border-radius: 1px;
    background: linear-gradient(#fff, #d8d3c8);
    font-size: 10px;
    font-weight: bold;
    line-height: 6px;
}

.folder {
    width: 16px;
    height: 14px;
    margin-right: 5px;
}

.swatch {
    width: 16px;
    height: 16px;
    margin-right: 1px;
    border: 1px solid #000;
}

.navy {
    background: #33506a;
}

.olive {
    background: #a5b45b;
}

.yellow {
    background: #ff0;
}

.cyan {
    background: #0ff;
}

.pink {
    background: #ffc0cb;
}

.green {
    background: #00fa9a;
}

.gray {
    background: #808080;
}

.vscroll {
    display: flex;
    flex-direction: column;
    justify-content: space-between;
    width: 17px;
    background: #f0f0f0;
}

.vscroll svg, .hscroll svg {
    width: 17px;
    height: 17px;
}

.vscroll .thumb {
    height: 66px;
    margin-bottom: auto;
    background: #cdcdcd;
}

.items-box {
    flex: 1;
    display: flex;
    flex-direction: column;
    justify-content: space-between;
    padding: 1px;
    border: 1px solid #828790;
}

.items-box table {
    width: 100%;
    border-collapse: collapse;
    table-layout: fixed;
}

.items-box th {
    height: 20px;
    padding: 0;
    border-right: 1px solid #dadada;
    border-bottom: 1px solid #dadada;
    background: linear-gradient(#fff, #f5f5f5);
    font-weight: normal;
}

.items-box th:last-child {
    border-right: 0;
}

.items-box td {
    height: 20px;
    padding: 0 0 0 18px;
}

.items-box td .folder {
    float: left;
}

.c-product {
    width: 268px;
}

.c-usage {
    width: 75px;
}

.c-waste {
    width: 60px;
}

.hscroll {
    display: flex;
    justify-content: space-between;
    background: #f0f0f0;
}

.hscroll .thumb {
    width: 291px;
    margin-right: auto;
    background: #cdcdcd;
}

.grip {
    display: flex;
    align-items: center;
    justify-content: center;
    height: 5px;
    background: #f5f5f5;
}

.grip i {
    width: 18px;
    height: 2px;
    background: repeating-linear-gradient(90deg, #777 0 2px, transparent 2px 4px);
}

.panel-link {
    display: flex;
    align-items: center;
    height: 26px;
    padding: 1px 0 0 5px;
    gap: 9px;
    overflow: hidden;
    border-top: 1px solid #c5c8d0;
    background: #f3f3f3;
    font-weight: bold;
}

.panel-link.current {
    height: 28px;
    background: #f0ffff;
}

/* drawing area */
.canvas {
    position: relative;
    flex: 1;
    overflow: hidden;
}

.dialog {
    position: absolute;
    top: 82px;
    left: 36px;
    display: flex;
    flex-direction: column;
    width: 946px;
    height: 593px;
    padding: 0 5px 5px;
    border: 1px solid #6b6b6b;
    background: #fff;
    box-shadow: 0 6px 22px rgba(0, 0, 0, 0.35);
}

.dialog-head {
    display: flex;
    align-items: center;
    height: 30px;
    margin-right: -5px;
    padding-left: 3px;
}

.head-icon {
    color: #4b7399;
}

.dialog-head h2 {
    flex: 1;
    padding-left: 5px;
}

.dialog-head button {
    display: flex;
    align-items: center;
    justify-content: center;
    width: 45px;
    height: 30px;
}

.tabs {
    display: flex;
    align-items: flex-end;
    height: 27px;
    padding-left: 2px;
}

.tabs button {
    height: 20px;
    border: 1px solid #acacac;
    border-bottom: 0;
    border-right: 0;
    background: linear-gradient(#f0f0f0, #e5e5e5);
    white-space: nowrap;
}

.tabs .active {
    position: relative;
    height: 23px;
    margin-bottom: -1px;
    padding-bottom: 2px;
    border-right: 1px solid #acacac;
    background: #fff;
}

.t-measurement {
    width: 85px;
}

.t-takeoff {
    width: 50px;
}

.t-roll {
    width: 90px;
}

.t-tile {
    width: 89px;
}

.t-drawing {
    width: 85px;
}

.t-hotkey {
    width: 47px;
}

.t-advanced {
    width: 69px;
}

.pane {
    flex: 1;
    display: flex;
    flex-direction: column;
    padding: 8px 8px 13px;
    border: 1px solid #acacac;
}

.pane-body {
    flex: 1;
    display: flex;
    gap: 1px;
}

.settings {
    flex: 1;
}

.btn {
    display: block;
    height: 20px;
    padding: 0 1px;
    border: 1px solid #707070;
    background: #ddd;
    white-space: nowrap;
}

.settings .btn {
    width: 50px;
    margin-bottom: 3px;
}

fieldset {
    position: relative;
    min-width: 0;
    margin: 0 0 4px 1px;
    padding: 0 0 4px 7px;
    border: 1px solid #d5dfe5;
    border-radius: 3px;
}

legend {
    margin-left: -2px;
    padding: 0 4px 0 2px;
    line-height: 14px;
}

.row {
    display: grid;
    grid-template-columns: 1fr 1fr 283px;
    grid-auto-rows: 19px;
    align-items: center;
}

.row.medium {
    grid-auto-rows: 22px;
}

.row.tall {
    grid-auto-rows: 26px;
}

.row label {
    display: flex;
    align-items: center;
    white-space: nowrap;
}

.pair {
    display: flex;
    align-items: center;
}

.pair label {
    width: 175px;
}

.pair .muted {
    width: 173px;
    padding-left: 2px;
    color: #777;
}

input[type="checkbox"] {
    appearance: none;
    width: 14px;
    height: 14px;
    margin-right: 5px;
    border: 1px solid #707070;
    background: #fff;
}

input[type="checkbox"]:checked {
    background: #fff url("data:image/svg+xml,%3Csvg xmlns='http://www.w3.org/2000/svg' width='12' height='12'%3E%3Cpath d='M2 6l3 4 5-8' fill='none' stroke='%23212121' stroke-width='2'/%3E%3C/svg%3E") center no-repeat;
}

input[type="checkbox"]:disabled {
    border-color: #bcbcbc;
    background-color: #e6e6e6;
    opacity: 0.8;
}

input[type="checkbox"].focus {
    border-color: #5586e6;
}

.cap {
    width: 103px;
    height: 18px;
    padding-left: 2px;
    border: 1px solid #abadb3;
}

#symbol {
    width: 107px;
    height: 22px;
    padding-left: 4px;
    border: 1px solid #c5c5c5;
    color: #888;
    opacity: 1;
}

.actions {
    display: flex;
    justify-content: flex-end;
    gap: 10px;
    padding: 5px 5px 0 0;
}

.actions .btn {
    width: 39px;
}

.actions .primary {
    position: relative;
    width: 35px;
    border-color: #0078d7;
}

/* red callouts lying over the form */
.mark {
    position: absolute;
    border: 5px solid #ff4343;
    box-shadow: 1px 3px 4px rgba(0, 0, 0, 0.5), inset 1px 3px 4px rgba(0, 0, 0, 0.4);
    pointer-events: none;
}

.mark-option {
    z-index: 1;
    top: -10px;
    left: -9px;
    width: 177px;
    height: 34px;
}

.mark-save {
    top: -19px;
    left: -15px;
    width: 57px;
    height: 59px;
}
```
